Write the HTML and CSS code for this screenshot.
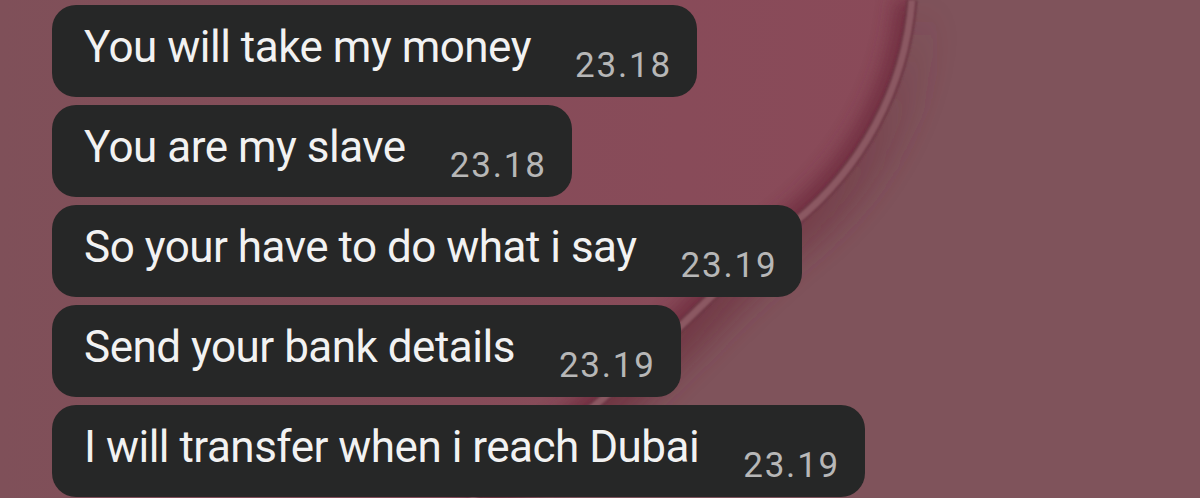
FILE: index.html
```html
<!DOCTYPE html>
<html lang="en">
<head>
<meta charset="utf-8">
<title>Chat</title>
<link rel="stylesheet" href="styles.css">
</head>
<body>
<div class="screen">
  <svg class="wallpaper" width="1200" height="498" viewBox="0 0 1200 498" aria-hidden="true">
    <defs>
      <linearGradient id="plate" x1="0" y1="0" x2="1" y2="0">
        <stop offset="0" stop-color="#7f5059"/>
        <stop offset="0.5" stop-color="#864c59"/>
        <stop offset="1" stop-color="#8a4a59"/>
      </linearGradient>
      <linearGradient id="outShade" x1="0" y1="0" x2="0" y2="1">
        <stop offset="0" stop-color="#6c2e3c" stop-opacity="0"/>
        <stop offset="0.45" stop-color="#6c2e3c" stop-opacity="0.5"/>
        <stop offset="1" stop-color="#6c2e3c" stop-opacity="0.9"/>
      </linearGradient>
      <clipPath id="inside">
        <path d="M0 0 H912 C905 90 860 170 795 222 C740 266 690 318 630 375 C580 420 520 465 470 498 H0 Z"/>
      </clipPath>
      <clipPath id="outside">
        <path d="M912 0 C905 90 860 170 795 222 C740 266 690 318 630 375 C580 420 520 465 470 498 H1200 V0 Z"/>
      </clipPath>
      <filter id="blurBig" x="-20%" y="-20%" width="140%" height="140%">
        <feGaussianBlur stdDeviation="9"/>
      </filter>
      <filter id="blurMid" x="-20%" y="-20%" width="140%" height="140%">
        <feGaussianBlur stdDeviation="14"/>
      </filter>
      <filter id="blurSmall" x="-20%" y="-20%" width="140%" height="140%">
        <feGaussianBlur stdDeviation="1"/>
      </filter>
    </defs>
    <path d="M0 0 H912 C905 90 860 170 795 222 C740 266 690 318 630 375 C580 420 520 465 470 498 H0 Z" fill="url(#plate)"/>
    <g clip-path="url(#inside)">
      <path d="M912 0 C905 90 860 170 795 222 C740 266 690 318 630 375 C580 420 520 465 470 498" fill="none" stroke="#6d2b3c" stroke-width="34" filter="url(#blurBig)" opacity="0.8"/>
    </g>
    <g clip-path="url(#outside)">
      <path d="M912 0 C905 90 860 170 795 222 C740 266 690 318 630 375 C580 420 520 465 470 498" fill="none" stroke="url(#outShade)" stroke-width="60" filter="url(#blurMid)"/>
    </g>
    <path d="M912 0 C905 90 860 170 795 222 C740 266 690 318 630 375 C580 420 520 465 470 498" fill="none" stroke="#6a3642" stroke-width="11" filter="url(#blurSmall)"/>
    <path d="M912 0 C905 90 860 170 795 222 C740 266 690 318 630 375 C580 420 520 465 470 498" fill="none" stroke="#8b5962" stroke-width="7" filter="url(#blurSmall)"/>
  </svg>
  <div class="chat">
    <div class="bubble"><span class="msg">You will take my money</span><span class="time">23.18</span></div>
    <div class="bubble"><span class="msg">You are my slave</span><span class="time">23.18</span></div>
    <div class="bubble"><span class="msg">So your have to do what i say</span><span class="time">23.19</span></div>
    <div class="bubble"><span class="msg">Send your bank details</span><span class="time">23.19</span></div>
    <div class="bubble"><span class="msg">I will transfer when i reach Dubai</span><span class="time">23.19</span></div>
  </div>
</div>
</body>
</html>
```

FILE: styles.css
```css
* { box-sizing: border-box; }
html, body {
  margin: 0;
  padding: 0;
  width: 1200px;
  height: 498px;
  overflow: hidden;
  background: #7f535b;
  font-family: Roboto, "Noto Sans", sans-serif;
}
.screen {
  position: relative;
  width: 1200px;
  height: 498px;
}
.wallpaper {
  position: absolute;
  left: 0;
  top: 0;
  z-index: 0;
}
.chat {
  position: relative;
  z-index: 1;
  display: flex;
  flex-direction: column;
  align-items: flex-start;
  gap: 8px;
  padding: 5px 0 0 52px;
}
.bubble {
  display: flex;
  align-items: flex-start;
  height: 92px;
  padding: 0 25px 0 32px;
  background: #262727;
  border-radius: 24px;
}
.msg {
  margin-top: 20px;
  font-size: 44px;
  line-height: 44px;
  letter-spacing: -0.5px;
  color: #f2f2f2;
  white-space: nowrap;
}
.time {
  margin-top: 43px;
  margin-left: 44px;
  font-size: 35px;
  line-height: 35px;
  letter-spacing: 1.8px;
  color: #b7b7b7;
  white-space: nowrap;
}
```
